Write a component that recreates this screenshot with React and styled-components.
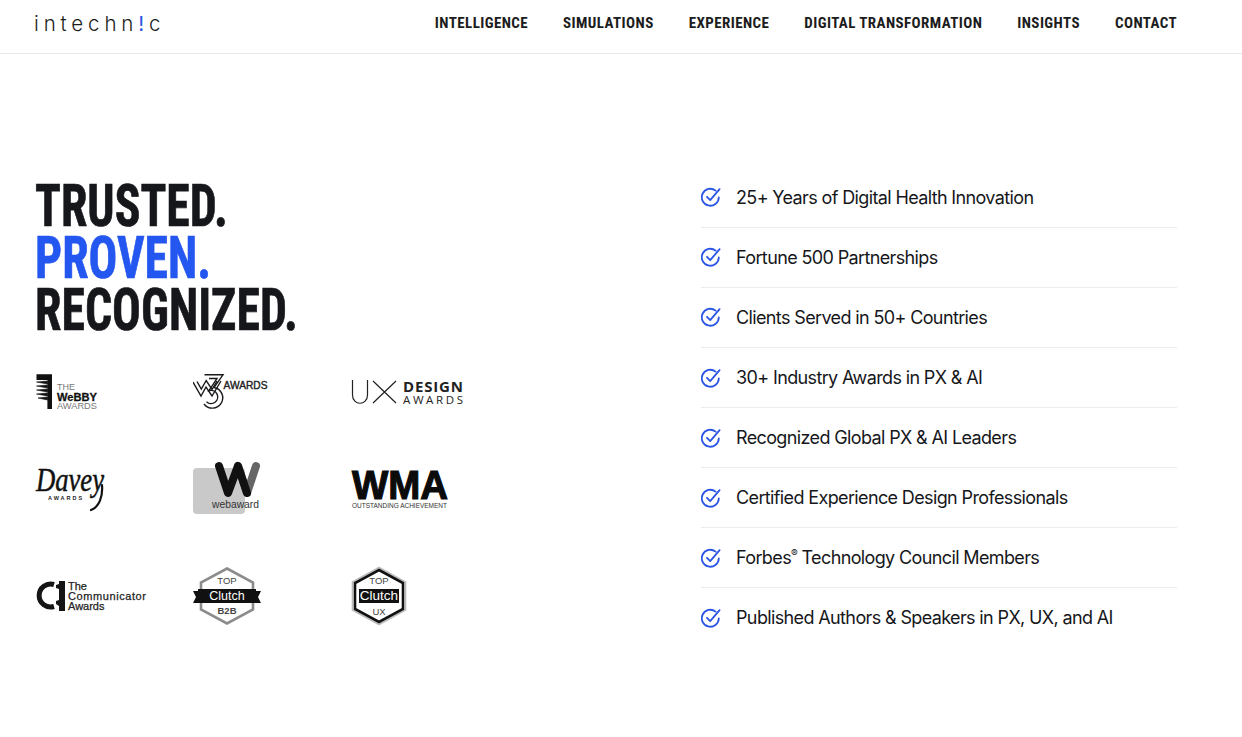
import React from 'react';
import styled, { createGlobalStyle } from 'styled-components';

const GlobalStyle = createGlobalStyle`
  html, body { margin: 0; padding: 0; background: #fff; }
  body { font-family: 'Inter', 'Liberation Sans', sans-serif; color: #16171b; }
`;

const Page = styled.div`
  width: 1242px;
  height: 737px;
  overflow: hidden;
  background: #fff;
`;

const Header = styled.header`
  display: flex;
  align-items: center;
  justify-content: space-between;
  height: 46px;
  padding: 0 65px 7px 34px;
  border-bottom: 1px solid #e9e9e9;
`;

const Brand = styled.div`
  font-family: 'Inter', sans-serif;
  font-size: 20.5px;
  font-weight: 300;
  letter-spacing: 4.85px;
  color: #1b1c20;
  span { color: #2a55e5; font-weight: 400; }
`;

const Nav = styled.nav`
  display: flex;
  gap: 35px;
`;

const NavLink = styled.a`
  font-family: 'Roboto Condensed', 'Roboto', sans-serif;
  font-size: 15px;
  font-weight: 700;
  letter-spacing: 0.42px;
  color: #1b1c20;
  text-decoration: none;
`;

const Main = styled.main`
  display: flex;
`;

const Left = styled.section`
  width: 701px;
  padding: 126px 0 0 35px;
  box-sizing: border-box;
`;

const Heading = styled.h1`
  margin: 0;
  font-family: 'Roboto Condensed', 'Roboto', sans-serif;
  font-size: 59px;
  font-weight: 700;
  line-height: 52px;
  color: #16171b;
  -webkit-text-stroke: 0.7px currentColor;
  transform: scaleX(0.81);
  transform-origin: left top;
`;

const HeadLine = styled.span`
  display: block;
  color: ${props => (props.$blue ? '#2456f0' : 'inherit')};
`;

const Logos = styled.div`
  display: grid;
  grid-template-columns: 158px 158px 158px;
  grid-template-rows: 38px 56px 60px;
  row-gap: 49.5px;
  margin-top: 37px;
  align-items: center;
  svg { display: block; }
`;

const List = styled.ul`
  list-style: none;
  margin: 113.7px 0 0;
  padding: 0;
  width: 476px;
`;

const Item = styled.li`
  display: flex;
  align-items: center;
  gap: 15px;
  height: 60.1px;
  box-sizing: border-box;
  border-bottom: 1px solid ${props => (props.$last ? 'transparent' : '#ececec')};
  font-family: 'Inter', sans-serif;
  font-size: 18px;
  letter-spacing: -0.63px;
  color: #16171b;
  sup { font-size: 10px; line-height: 0; }
`;

const CheckIcon = () => (
  <svg width="20" height="20" viewBox="0 0 20 20" fill="none" stroke="#2a55e5" strokeWidth="1.8" strokeLinecap="round" strokeLinejoin="round">
    <path d="M14.6 3.6A8.5 8.5 0 1 0 17.8 10.5" />
    <path d="M6 9.8l3.2 3.4L18.6 2.2" />
  </svg>
);

const WebbyLogo = () => (
  <svg width="70" height="38" viewBox="0 0 70 38">
    <path d="M1.5 1.2h15.5V36h-4.6V7H1.5z" fill="#111" />
    <path d="M1.5 9l11 -1v3zM1.5 13l11-1v3zM1.5 17l11-1v3zM1.5 21l11-1v3zM3 25l9.5-1v3z" fill="#111" stroke="#111" strokeWidth="0.6" />
    <g fontFamily="Liberation Sans, sans-serif">
      <text x="22" y="17" fontSize="9" fill="#777">THE</text>
      <text x="22" y="27.5" fontSize="11" fontWeight="700" fill="#111" stroke="#111" strokeWidth="0.3" textLength="40" lengthAdjust="spacingAndGlyphs">WeBBY</text>
      <text x="22" y="36" fontSize="8.5" fill="#777" textLength="40" lengthAdjust="spacingAndGlyphs">AWARDS</text>
    </g>
  </svg>
);

const W3Logo = () => (
  <svg width="84" height="38" viewBox="0 0 84 38">
    <g fill="none" stroke="#1a1a1a" strokeWidth="1.4">
      <path d="M0 9l8 14 5-9 6 9 9-15" />
      <path d="M4 8.5l4.3 7.5 4.9-8.5 5.8 9 5-8.5" />
      <path d="M11.5 1.8H30L21 14.5a10.4 10.4 0 1 1-10 16.5" />
      <path d="M16 5.5h8l-8 12.2a6.6 6.6 0 1 1-2.5 11" />
    </g>
    <text x="30.5" y="16" fontFamily="Liberation Sans, sans-serif" fontSize="10.5" fill="#222" stroke="#222" strokeWidth="0.4" textLength="44" lengthAdjust="spacingAndGlyphs">AWARDS</text>
  </svg>
);

const UxLogo = () => (
  <svg width="115" height="38" viewBox="0 0 115 38">
    <g fill="none" stroke="#222" strokeWidth="1.2">
      <path d="M1.5 7v15c0 11 15 11 15 0V7" />
      <path d="M22 8l23 22M45 8L22 30" />
    </g>
    <g fontFamily="Open Sans, sans-serif" fill="#222">
      <text x="52" y="19" fontSize="15" fontWeight="700" textLength="60">DESIGN</text>
      <text x="52" y="31" fontSize="11.5" textLength="60">AWARDS</text>
    </g>
  </svg>
);

const DaveyLogo = () => (
  <svg width="90" height="56" viewBox="0 0 90 56">
    <text x="1" y="30" fontFamily="Liberation Serif, serif" fontStyle="italic" fontSize="33" fill="#111" stroke="#111" strokeWidth="0.5" textLength="68" lengthAdjust="spacingAndGlyphs">Davey</text>
    <text x="13" y="39" fontFamily="Liberation Sans, sans-serif" fontSize="5.5" fontWeight="700" letterSpacing="2" fill="#222">AWARDS</text>
    <path d="M67 24c1 12-3 22-11 25" fill="none" stroke="#111" strokeWidth="2.2" strokeLinecap="round" />
  </svg>
);

const WebawardLogo = () => (
  <svg width="68" height="56" viewBox="0 0 68 56">
    <rect x="0" y="7" width="52" height="46" rx="4" fill="#c9c9c9" />
    <path d="M45 5l9 27 9-27" fill="none" stroke="#666" strokeWidth="8" strokeLinecap="round" strokeLinejoin="round" />
    <path d="M26 5l9 27 10-27 9 27" fill="none" stroke="#111" strokeWidth="8" strokeLinecap="round" strokeLinejoin="round" />
    <text x="19" y="47" fontFamily="Liberation Sans, sans-serif" fontSize="10.5" fill="#333" textLength="47" lengthAdjust="spacingAndGlyphs">webaward</text>
  </svg>
);

const WmaLogo = () => (
  <svg width="100" height="56" viewBox="0 0 100 56">
    <text x="1" y="38" fontFamily="Liberation Sans, sans-serif" fontSize="40" fontWeight="700" fill="#0b0b0b" stroke="#0b0b0b" strokeWidth="1.2" textLength="96" lengthAdjust="spacingAndGlyphs">WMA</text>
    <text x="1" y="47" fontFamily="Liberation Sans, sans-serif" fontSize="6.5" fill="#333" textLength="95" lengthAdjust="spacingAndGlyphs">OUTSTANDING ACHIEVEMENT</text>
  </svg>
);

const CommunicatorLogo = () => (
  <svg width="114" height="60" viewBox="0 0 114 60">
    <path d="M19 18.5a11.5 11.5 0 1 0 0 22" fill="none" stroke="#151515" strokeWidth="5" />
    <path d="M24 15h6v30h-6v-5l-3-2v-3l3-1V23l-3-1v-3l3-1z" fill="#151515" />
    <g fontFamily="Liberation Sans, sans-serif" fontSize="11" fill="#222" stroke="#222" strokeWidth="0.25">
      <text x="33" y="24">The</text>
      <text x="33" y="34" textLength="78">Communicator</text>
      <text x="33" y="44">Awards</text>
    </g>
  </svg>
);

const ClutchB2b = () => (
  <svg width="68" height="60" viewBox="0 0 68 60">
    <path d="M34 2.5l26 14v27l-26 14-26-14v-27z" fill="#fff" stroke="#8c8c8c" strokeWidth="2.6" />
    <path d="M0 25h7v12H0l3-6z M68 25h-7v12h7l-3-6z" fill="#111" />
    <rect x="5" y="23" width="58" height="14" fill="#111" />
    <g fontFamily="Liberation Sans, sans-serif" textAnchor="middle">
      <text x="34" y="18" fontSize="9.5" fill="#444">TOP</text>
      <text x="34" y="34" fontSize="12.5" fill="#fff">Clutch</text>
      <text x="34" y="48" fontSize="9.5" fill="#444" fontWeight="700">B2B</text>
    </g>
  </svg>
);

const ClutchUx = () => (
  <svg width="58" height="60" viewBox="0 0 58 60">
    <path d="M28 1.5l26.5 14.5v28L28 58.5 1.5 44V16z" fill="#fff" stroke="#bbb" strokeWidth="1.6" />
    <path d="M28 4l24 13v26L28 56 4 43V17z" fill="#fff" stroke="#111" strokeWidth="2.6" />
    <rect x="8" y="23" width="40" height="14" fill="#111" />
    <g fontFamily="Liberation Sans, sans-serif" textAnchor="middle">
      <text x="28" y="18" fontSize="9.5" fill="#444">TOP</text>
      <text x="28" y="34" fontSize="13.5" fill="#fff">Clutch</text>
      <text x="28" y="49" fontSize="9.5" fill="#444">UX</text>
    </g>
  </svg>
);

const navItems = ['INTELLIGENCE', 'SIMULATIONS', 'EXPERIENCE', 'DIGITAL TRANSFORMATION', 'INSIGHTS', 'CONTACT'];

const points = [
  '25+ Years of Digital Health Innovation',
  'Fortune 500 Partnerships',
  'Clients Served in 50+ Countries',
  '30+ Industry Awards in PX & AI',
  'Recognized Global PX & AI Leaders',
  'Certified Experience Design Professionals',
  <>Forbes<sup>®</sup> Technology Council Members</>,
  'Published Authors & Speakers in PX, UX, and AI',
];

const App = () => (
  <Page>
    <GlobalStyle />
    <Header>
      <Brand>intechn<span>!</span>c</Brand>
      <Nav>
        {navItems.map(item => <NavLink key={item}>{item}</NavLink>)}
      </Nav>
    </Header>
    <Main>
      <Left>
        <Heading>
          <HeadLine>TRUSTED.</HeadLine>
          <HeadLine $blue>PROVEN.</HeadLine>
          <HeadLine>RECOGNIZED.</HeadLine>
        </Heading>
        <Logos>
          <WebbyLogo />
          <W3Logo />
          <UxLogo />
          <DaveyLogo />
          <WebawardLogo />
          <WmaLogo />
          <CommunicatorLogo />
          <ClutchB2b />
          <ClutchUx />
        </Logos>
      </Left>
      <List>
        {points.map((point, index) => (
          <Item key={index} $last={index === points.length - 1}>
            <CheckIcon />
            <span>{point}</span>
          </Item>
        ))}
      </List>
    </Main>
  </Page>
);

export default App;
